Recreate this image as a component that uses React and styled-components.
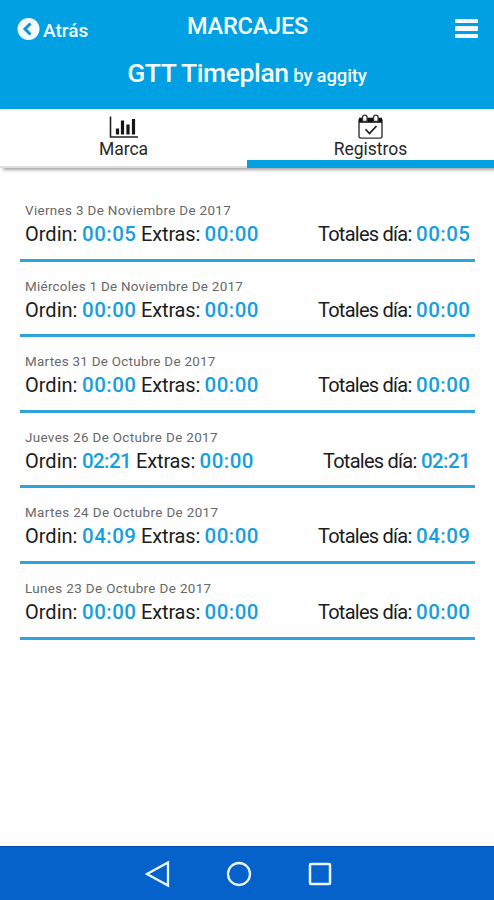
import React, { useState } from 'react';
import styled, { createGlobalStyle } from 'styled-components';

const GlobalStyle = createGlobalStyle`
  * {
    box-sizing: border-box;
  }

  body {
    margin: 0;
    background-color: #fff;
    font-family: Roboto, 'Noto Sans', sans-serif;
  }
`;

const StyledScreen = styled.div`
  display: flex;
  flex-direction: column;
  width: 494px;
  height: 900px;
  overflow: hidden;
  background-color: #fefefe;
`;

const StyledHeader = styled.header`
  height: 109px;
  flex-shrink: 0;
  background-color: #00a0e3;
  color: #f4fcff;
`;

const StyledTopBar = styled.div`
  display: grid;
  grid-template-columns: 150px 1fr 150px;
  height: 56px;
  padding: 0 16px 0 17px;
`;

const StyledBack = styled.button`
  display: flex;
  align-items: center;
  align-self: start;
  gap: 3px;
  height: 24px;
  margin-top: 17px;
  padding: 0;
  border: none;
  background: none;
  color: inherit;
  font-family: inherit;
  font-size: 19px;
  font-weight: 500;
  line-height: 24px;
  cursor: pointer;

  span {
    padding-top: 3px;
  }
`;

const StyledTitle = styled.h1`
  margin: 11px 0 0;
  font-size: 23.5px;
  font-weight: 500;
  line-height: 30px;
  text-align: center;
  letter-spacing: -0.2px;
  white-space: nowrap;
`;

const StyledMenu = styled.button`
  display: flex;
  flex-direction: column;
  justify-self: end;
  gap: 3px;
  width: 23px;
  margin-top: 19px;
  padding: 0;
  border: none;
  background: none;
  cursor: pointer;
`;

const StyledMenuLine = styled.span`
  height: 4.3px;
  border-radius: 1px;
  background-color: #f4fcff;
`;

const StyledBrand = styled.div`
  font-size: 26.5px;
  font-weight: 500;
  line-height: 34px;
  text-align: center;
  white-space: nowrap;
  letter-spacing: -0.4px;
  word-spacing: -0.5px;

  small {
    margin-left: -1px;
    font-size: 18.5px;
    letter-spacing: -0.1px;
  }
`;

const StyledTabs = styled.nav`
  display: flex;
  height: 59px;
  flex-shrink: 0;
  background-color: #fff;
  box-shadow: 3px 2px 3px rgba(0, 0, 0, 0.35);
`;

const StyledTab = styled.button`
  display: flex;
  flex: 1;
  flex-direction: column;
  align-items: center;
  justify-content: flex-start;
  padding: 5px 0 0;
  border: none;
  border-bottom: ${(props) => (props.$active ? '8px solid #00a0e3' : '2px solid #ddd')};
  background: none;
  color: #292929;
  font-family: inherit;
  font-size: 17.5px;
  line-height: 20px;
  cursor: pointer;

  svg {
    flex-shrink: 0;
  }
`;

const StyledList = styled.main`
  flex: 1;
  padding: 18px 19px 0 20px;
`;

const StyledDay = styled.section`
  height: 75.6px;
  padding: 16px 5px 0 5px;
  border-bottom: 3px solid #2fa3dc;
`;

const StyledDate = styled.div`
  color: #686868;
  font-size: 13.4px;
  line-height: 17px;
  letter-spacing: ${(props) => props.$tracking}px;
  white-space: nowrap;
`;

const StyledTotals = styled.div`
  display: flex;
  gap: 5px;
  margin-top: 3px;
  color: #1c1c1c;
  font-size: 20px;
  line-height: 24px;
  white-space: nowrap;
`;

const StyledLabel = styled.span`
  width: ${(props) => props.$width}px;
  letter-spacing: ${(props) => props.$tracking}px;

  &:last-of-type {
    margin-left: auto;
  }
`;

const StyledTime = styled.strong`
  width: ${(props) => (props.$narrow ? 49 : 54)}px;
  color: #159fdf;
  font-size: 20.5px;
  font-weight: 500;
  letter-spacing: ${(props) => (props.$narrow ? -0.6 : 0.5)}px;
`;

const StyledNavigation = styled.footer`
  display: flex;
  align-items: center;
  justify-content: center;
  gap: 55px;
  height: 54px;
  flex-shrink: 0;
  padding-right: 16px;
  border-top: 1px solid #064caf;
  background-color: #0462ca;
`;

const days = [
  { date: 'Viernes 3 De Noviembre De 2017', ordinary: '00:05', extra: '00:00', total: '00:05', tracking: 0.35 },
  { date: 'Miércoles 1 De Noviembre De 2017', ordinary: '00:00', extra: '00:00', total: '00:00', tracking: 0.28 },
  { date: 'Martes 31 De Octubre De 2017', ordinary: '00:00', extra: '00:00', total: '00:00', tracking: 0.28 },
  { date: 'Jueves 26 De Octubre De 2017', ordinary: '02:21', extra: '00:00', total: '02:21', tracking: 0.36 },
  { date: 'Martes 24 De Octubre De 2017', ordinary: '04:09', extra: '00:00', total: '04:09', tracking: 0.38 },
  { date: 'Lunes 23 De Octubre De 2017', ordinary: '00:00', extra: '00:00', total: '00:00', tracking: 0.38 },
];

const BackIcon = () => (
  <svg width="23" height="24" viewBox="0 0 23 24">
    <circle cx="11.5" cy="12" r="11" fill="#f4fcff" />
    <path d="M13.5 6.5 8 12l5.5 5.5" fill="none" stroke="#0799d6" strokeWidth="3" />
  </svg>
);

const ChartIcon = () => (
  <svg width="30" height="25" viewBox="0 0 30 25">
    <path d="M1.5 2.5v20.5H29" fill="none" stroke="#222" strokeWidth="1.6" />
    <path d="M8.5 20.5v-6M13.5 20.5V6.5M19 20.5V10.5M24.5 20.5V5" stroke="#151515" strokeWidth="3.2" />
  </svg>
);

const CalendarIcon = () => (
  <svg width="26" height="25" viewBox="0 0 26 27" preserveAspectRatio="none">
    <rect x="1" y="5" width="23" height="21" rx="2" fill="none" stroke="#333" strokeWidth="1.4" />
    <path d="M1 4h23v5.5H1z" fill="#111" />
    <path d="M4.5 8V3.5a2.3 2.3 0 0 1 4.6 0V8zM15.5 8V3.5a2.3 2.3 0 0 1 4.6 0V8z" fill="#fff" stroke="#333" strokeWidth="1.3" />
    <path d="m7.5 16.5 4 4.5 7-8" fill="none" stroke="#222" strokeWidth="1.8" />
  </svg>
);

const Time = ({ value }) => <StyledTime $narrow={value.includes('1')}>{value}</StyledTime>;

const Day = ({ day }) => (
  <StyledDay>
    <StyledDate $tracking={day.tracking}>{day.date}</StyledDate>
    <StyledTotals>
      <StyledLabel $width={52} $tracking={0}>Ordin:</StyledLabel>
      <Time value={day.ordinary} />
      <StyledLabel $width={58.5} $tracking={-0.15}>Extras:</StyledLabel>
      <Time value={day.extra} />
      <StyledLabel $width={93} $tracking={-0.75}>Totales día:</StyledLabel>
      <Time value={day.total} />
    </StyledTotals>
  </StyledDay>
);

const App = () => {
  const [activeTab, setActiveTab] = useState('registros');

  return (
    <StyledScreen>
      <GlobalStyle />
      <StyledHeader>
        <StyledTopBar>
          <StyledBack>
            <BackIcon />
            <span>Atrás</span>
          </StyledBack>
          <StyledTitle>MARCAJES</StyledTitle>
          <StyledMenu aria-label="Menú">
            <StyledMenuLine />
            <StyledMenuLine />
            <StyledMenuLine />
          </StyledMenu>
        </StyledTopBar>
        <StyledBrand>
          GTT Timeplan <small>by aggity</small>
        </StyledBrand>
      </StyledHeader>
      <StyledTabs>
        <StyledTab $active={activeTab === 'marca'} onClick={() => setActiveTab('marca')}>
          <ChartIcon />
          Marca
        </StyledTab>
        <StyledTab $active={activeTab === 'registros'} onClick={() => setActiveTab('registros')}>
          <CalendarIcon />
          Registros
        </StyledTab>
      </StyledTabs>
      <StyledList>
        {days.map((day) => (
          <Day key={day.date} day={day} />
        ))}
      </StyledList>
      <StyledNavigation>
        <svg width="26" height="28" viewBox="0 0 26 28">
          <path d="M23 2.5v23L2 14z" fill="none" stroke="#e9f5ff" strokeWidth="2.3" />
        </svg>
        <svg width="26" height="26" viewBox="0 0 26 26">
          <circle cx="13" cy="13" r="11" fill="none" stroke="#e9f5ff" strokeWidth="2.3" />
        </svg>
        <svg width="26" height="26" viewBox="0 0 26 26">
          <rect x="3" y="3" width="20" height="20" rx="1" fill="none" stroke="#e9f5ff" strokeWidth="2.5" />
        </svg>
      </StyledNavigation>
    </StyledScreen>
  );
};

export default App;
